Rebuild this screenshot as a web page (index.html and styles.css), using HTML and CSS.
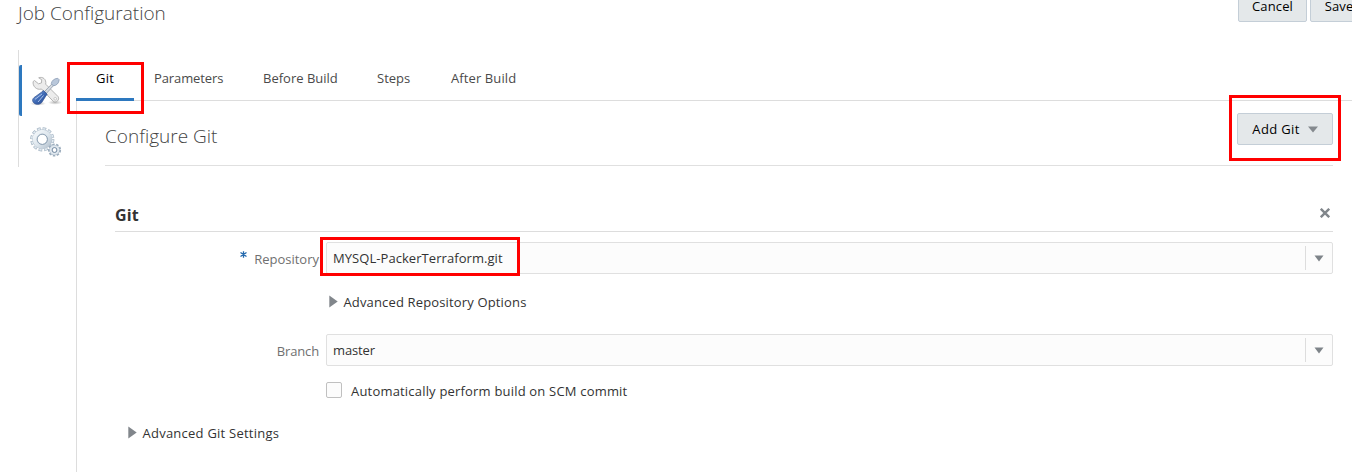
FILE: index.html
```html
<!DOCTYPE html>
<html lang="en">
<head>
<meta charset="utf-8">
<title>Job Configuration</title>
<link rel="stylesheet" href="styles.css">
</head>
<body>
<div class="page">
  <header class="topbar">
    <h1 class="title">Job Configuration</h1>
    <div class="actions">
      <button class="btn btn-cancel">Cancel</button>
      <button class="btn btn-save">Save</button>
    </div>
  </header>
  <div class="body">
    <nav class="rail">
      <a class="rail-item selected">
        <svg width="32" height="32" viewBox="0 0 32 32">
          <defs>
            <linearGradient id="handle" x1="0" y1="0" x2="1" y2="1"><stop offset="0" stop-color="#8fb1e2"/><stop offset=".5" stop-color="#3f6ab5"/><stop offset="1" stop-color="#24478d"/></linearGradient>
            <radialGradient id="shade"><stop offset="0" stop-color="#999" stop-opacity=".7"/><stop offset="1" stop-color="#999" stop-opacity="0"/></radialGradient>
          </defs>
          <ellipse cx="8" cy="28.500" rx="8" ry="2.200" fill="url(#shade)"/>
          <ellipse cx="25" cy="27.500" rx="7" ry="2.200" fill="url(#shade)"/>
          <path d="M4.500 5.500L8.500 8.800l3-.9.200-3.200L8.700 2.800C12.800 1.300 16.600 4.300 15.700 9.200L28 21.500c2.200 3-1.600 7-4.800 4.800L11.500 14C6.500 15.500 2.300 11 3.200 6.500z" fill="#ececec" stroke="#ababab" stroke-width=".9"/>
          <circle cx="25.200" cy="23.800" r="1.300" fill="#fff" stroke="#aaa" stroke-width=".6"/>
          <path d="M14.500 16.500L22.800 8l1.600 1.600L16.500 18.300z" fill="#d5dae0" stroke="#8f9baa" stroke-width=".8"/>
          <path d="M21.300 8.500c.5-2.800 2.700-5 6.500-5.200l1.400 1.400c-.3 3.600-2.800 6-6 6.100z" fill="#b9c7da" stroke="#8c9db5" stroke-width=".8"/>
          <path d="M13.500 15.600l3.700 3.600-1.500 2-4 6.400c-2.300 2.400-6 2.200-8 .1-1.600-1.700-1.400-3.600.2-5l7.600-5.500z" fill="url(#handle)" stroke="#2c4d8e" stroke-width=".7"/>
          <path d="M5 24.300l7-5.300M8 27l5.500-6.500" stroke="#a9c1ea" stroke-width="1" fill="none"/>
        </svg>
      </a>
      <a class="rail-item">
        <svg width="32" height="32" viewBox="0 0 32 32">
          <defs><linearGradient id="metal" x1="0" y1="0" x2="1" y2="1"><stop offset="0" stop-color="#f3f7fa"/><stop offset=".55" stop-color="#dce5ec"/><stop offset="1" stop-color="#b8c5d1"/></linearGradient></defs>
          <g fill="none">
            <circle cx="12.300" cy="13.300" r="10.600" stroke="#a5b5c4" stroke-width="3" stroke-dasharray="3.550 2"/>
            <circle cx="12.300" cy="13.300" r="10.100" stroke="#e3ebf1" stroke-width="2.600" stroke-dasharray="2.250 3.038" stroke-dashoffset="-.57"/>
            <circle cx="12.300" cy="13.300" r="7.300" stroke="#b2c0cd" stroke-width="5.400"/>
            <circle cx="12.300" cy="13.300" r="7.300" stroke="url(#metal)" stroke-width="4.600"/>
            <circle cx="12.300" cy="13.300" r="5.200" stroke="#8fa2b4" stroke-width="1"/>
            <circle cx="24.500" cy="24" r="5.600" stroke="#9cadbd" stroke-width="2" stroke-dasharray="2.400 1.510"/>
            <circle cx="24.500" cy="24" r="3.700" stroke="#a6b6c5" stroke-width="3"/>
            <circle cx="24.500" cy="24" r="3.700" stroke="#dfe7ee" stroke-width="2.200"/>
            <circle cx="24.500" cy="24" r="2.400" stroke="#7389a0" stroke-width=".9"/>
          </g>
        </svg>
      </a>
    </nav>
    <main class="main">
      <div class="tabs">
        <a class="tab tab-git active">Git</a>
        <a class="tab tab-params">Parameters</a>
        <a class="tab tab-before">Before Build</a>
        <a class="tab tab-steps">Steps</a>
        <a class="tab tab-after">After Build</a>
      </div>
      <section class="panel">
        <div class="panel-head">
          <h2 class="subtitle">Configure Git</h2>
          <button class="btn btn-add">Add Git <svg width="10" height="7" viewBox="0 0 10 7"><path d="M0 .5h10L5 6.500z" fill="#84898e"/></svg></button>
        </div>
        <div class="card">
          <div class="card-head">
            <h3 class="card-title">Git</h3>
            <svg class="close" width="10" height="10" viewBox="0 0 10 10"><path d="M.8.8l8.400 8.400M9.200.8L.8 9.200" stroke="#81868b" stroke-width="2.400"/></svg>
          </div>
          <div class="row">
            <div class="label"><svg class="star" width="7" height="7" viewBox="0 0 7 7"><path d="M3.500 .3v6.400M.5 1.500l6 4M6.500 1.500l-6 4" stroke="#2469ad" stroke-width="1.300"/></svg><span class="t-repo">Repository</span></div>
            <div class="select"><span class="value t-url">MYSQL-PackerTerraform.git</span><span class="arrow"><svg width="10" height="7" viewBox="0 0 10 7"><path d="M.5 .5h9L5 6.500z" fill="#7e8489"/></svg></span></div>
          </div>
          <div class="disclosure repo-options"><svg width="9" height="13" viewBox="0 0 9 13"><path d="M.3.500L8.700 6.500.3 12.500z" fill="#81868b"/></svg><span class="t-adv">Advanced Repository Options</span></div>
          <div class="row">
            <div class="label"><span class="t-branch">Branch</span></div>
            <div class="select"><span class="value t-master">master</span><span class="arrow"><svg width="10" height="7" viewBox="0 0 10 7"><path d="M.5 .5h9L5 6.500z" fill="#7e8489"/></svg></span></div>
          </div>
          <div class="check"><span class="box"></span><span class="t-auto">Automatically perform build on SCM commit</span></div>
          <div class="disclosure git-settings"><svg width="9" height="13" viewBox="0 0 9 13"><path d="M.3.500L8.700 6.500.3 12.500z" fill="#81868b"/></svg><span class="t-set">Advanced Git Settings</span></div>
        </div>
      </section>
    </main>
  </div>
  <div class="mark mark-tab"></div>
  <div class="mark mark-add"></div>
  <div class="mark mark-repo"></div>
</div>
</body>
</html>
```
FILE: styles.css
```css
* { box-sizing: border-box; }
body { margin: 0; background: #fff; color: #333; font: 13px/20px "Open Sans", "Noto Sans", sans-serif; white-space: nowrap; }
h1, h2, h3 { margin: 0; }
svg { display: block; flex: none; }
.page { position: relative; width: 1352px; height: 472px; overflow: hidden; display: flex; flex-direction: column; }
.topbar { height: 50px; padding-left: 18px; display: flex; justify-content: space-between; align-items: flex-start; flex: none; }
.title, .subtitle { font-size: 19px; line-height: 26px; font-weight: 300; color: #444; }
.actions { display: flex; gap: 3px; width: 114px; flex: none; overflow: hidden; }
.btn { font: inherit; color: #000; background: #e4e8ea; border: 1px solid #c4ced7; border-radius: 2px; height: 32px; padding: 0; display: flex; align-items: center; justify-content: center; flex: none; }
.actions .btn { margin-top: -10px; width: 69px; letter-spacing: .15px; }
.actions .btn-save { width: 58px; }
.body { display: flex; flex: 1; padding-left: 18px; }
.rail { width: 58px; height: 117px; padding-top: 15px; border-left: 1px solid #ddd; flex: none; }
.rail-item { display: flex; height: 51px; padding: 10px 0 0 8px; border-left: 3px solid transparent; }
.rail-item.selected { border-left-color: #2d78bf; border-radius: 2px; }
.main { flex: 1; border-left: 1px solid #ddd; border-image: linear-gradient(#fff 50px, #ddd 50px) 1; border-width: 0 0 0 1px; }
.tabs { display: flex; height: 51px; border-bottom: 1px solid #ddd; margin-left: -1px; }
.tab { height: 51px; padding: 18px 0 0 20px; color: #4a4a4a; flex: none; }
.tab.active { color: #000; border-bottom: 3px solid #2d78bf; }
.tab-git { width: 58px; letter-spacing: .2px; }
.tab-params { width: 109px; letter-spacing: -.1px; }
.tab-before { width: 114px; }
.tab-steps { width: 74px; }
.tab-after { width: 105px; letter-spacing: .1px; }
.panel { padding: 0 19px 0 28px; }
.panel-head { height: 65px; padding-top: 12px; border-bottom: 1px solid #e0e0e0; display: flex; justify-content: space-between; align-items: flex-start; }
.subtitle { margin-top: 10px; }
.btn-add { width: 96px; gap: 8px; letter-spacing: .35px; }
.card { padding: 38px 0 0 10px; }
.card-head { height: 28px; display: flex; justify-content: space-between; border-bottom: 1px solid #ddd; margin-bottom: 10px; }
.card-title { font-size: 16px; line-height: 22px; font-weight: 700; letter-spacing: .2px; }
.close { margin: 4px 3px 0 0; }
.row { display: flex; height: 32px; }
.label { width: 211px; padding: 7px 7px 0 0; display: flex; justify-content: flex-end; color: #707070; flex: none; }
.star { margin: 2px 7px 0 0; }
.t-branch { letter-spacing: -.15px; }
.select { flex: 1; border: 1px solid #e0e0e0; border-radius: 2px; background: #fcfcfc; display: flex; justify-content: space-between; align-items: center; padding-left: 6px; }
.t-url { letter-spacing: .06px; }
.t-master { letter-spacing: -.15px; }
.arrow { width: 27px; height: 24px; border-left: 1px solid #ddd; padding: 9px 0 0 8px; }
.disclosure { display: flex; align-items: center; height: 20px; gap: 5.5px; }
.t-adv { letter-spacing: .15px; }
.t-set { letter-spacing: .24px; }
.t-auto { letter-spacing: .19px; }
.repo-options { margin: 18px 0 22px 214px; }
.repo-options svg, .git-settings svg { margin-top: -1px; }
.check { display: flex; margin: 15px 0 0 211px; height: 20px; gap: 9px; }
.box { width: 16px; height: 16px; margin-top: 1px; border: 1px solid #c0c0c0; border-radius: 2px; background: #fcfcfc; }
.git-settings { margin: 22px 0 0 13px; }
.mark { position: absolute; border: 3px solid #f00; }
.mark-tab { left: 67px; top: 62px; width: 77px; height: 52px; }
.mark-add { left: 1229px; top: 95px; width: 112px; height: 66px; }
.mark-repo { left: 320px; top: 237px; width: 200px; height: 39px; }
```
